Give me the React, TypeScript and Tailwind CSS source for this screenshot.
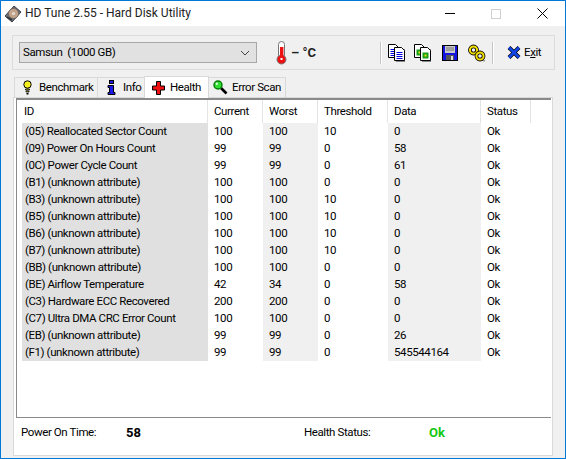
const rows: [string, string, string, string, string][] = [
  ["(05) Reallocated Sector Count", "100", "100", "10", "0"],
  ["(09) Power On Hours Count", "99", "99", "0", "58"],
  ["(0C) Power Cycle Count", "99", "99", "0", "61"],
  ["(B1) (unknown attribute)", "100", "100", "0", "0"],
  ["(B3) (unknown attribute)", "100", "100", "10", "0"],
  ["(B5) (unknown attribute)", "100", "100", "10", "0"],
  ["(B6) (unknown attribute)", "100", "100", "10", "0"],
  ["(B7) (unknown attribute)", "100", "100", "10", "0"],
  ["(BB) (unknown attribute)", "100", "100", "0", "0"],
  ["(BE) Airflow Temperature", "42", "34", "0", "58"],
  ["(C3) Hardware ECC Recovered", "200", "200", "0", "0"],
  ["(C7) Ultra DMA CRC Error Count", "100", "100", "0", "0"],
  ["(EB) (unknown attribute)", "99", "99", "0", "26"],
  ["(F1) (unknown attribute)", "99", "99", "0", "545544164"],
];

function DiskIcon() {
  return (
    <svg width="18" height="18" viewBox="0 0 18 18" className="shrink-0">
      <path d="M10 1 L17 7 L8 17 L1 11 Z" fill="#6a7078" stroke="#3c4048" strokeWidth="1" />
      <circle cx="9.5" cy="8.5" r="5" fill="#c2a48c" stroke="#6a5a50" strokeWidth="0.7" />
      <circle cx="9.5" cy="8.5" r="1.6" fill="#e8dccf" />
      <path d="M3 12 L8 15" stroke="#222" strokeWidth="1.2" />
    </svg>
  );
}

function Thermo() {
  return (
    <svg width="11" height="24" viewBox="0 0 11 24">
      <rect x="2.5" y="0.5" width="6" height="17" rx="3" fill="#fff" stroke="#777" />
      <circle cx="5.5" cy="18.5" r="4.5" fill="#ee1111" stroke="#777" />
      <rect x="4" y="6" width="3.4" height="12" fill="#ee1111" />
      <rect x="4.5" y="17" width="2" height="2" fill="#fff" />
    </svg>
  );
}

function Doc({ x, y, lines }: { x: number; y: number; lines: boolean }) {
  return (
    <g>
      <path d={`M${x} ${y}h7l3 3v10h-10z`} fill="#fff" stroke="#000" />
      {lines ? (
        <path d={`M${x + 2} ${y + 5}h6M${x + 2} ${y + 7}h6M${x + 2} ${y + 9}h6M${x + 2} ${y + 11}h6`} stroke="#0000e0" />
      ) : (
        <g>
          <rect x={x + 2} y={y + 5} width="6" height="6" fill="#18a018" />
          <rect x={x + 4} y={y + 7} width="2" height="2" fill="#f0e010" />
        </g>
      )}
    </g>
  );
}

function Copy({ lines }: { lines: boolean }) {
  return (
    <svg width="17" height="18" viewBox="0 0 17 18">
      <rect x="8" y="5" width="9" height="13" fill="#888" />
      <Doc x={0.5} y={0.5} lines={lines} />
      <Doc x={6.5} y={3.5} lines={lines} />
    </svg>
  );
}

function Floppy() {
  return (
    <svg width="16" height="16" viewBox="0 0 16 16">
      <rect x="0.5" y="0.5" width="15" height="15" fill="#1414e0" stroke="#000" />
      <rect x="3" y="1" width="10" height="7" fill="#c8c8c8" />
      <path d="M4 3h8M4 5h8" stroke="#777" />
      <rect x="4" y="10" width="8" height="5" fill="#555" />
      <rect x="9" y="11" width="2" height="4" fill="#ddd" />
    </svg>
  );
}

function Chain() {
  return (
    <svg width="18" height="18" viewBox="0 0 18 18">
      <path d="M14 16 L17 17" stroke="#999" strokeWidth="1.5" />
      <circle cx="5.5" cy="6" r="3.6" fill="none" stroke="#000" strokeWidth="3.6" />
      <circle cx="5.5" cy="6" r="3.6" fill="none" stroke="#f5e000" strokeWidth="2" />
      <circle cx="12" cy="12" r="3.6" fill="none" stroke="#000" strokeWidth="3.6" />
      <circle cx="12" cy="12" r="3.6" fill="none" stroke="#f5e000" strokeWidth="2" />
    </svg>
  );
}

function XIcon() {
  return (
    <svg width="14" height="13" viewBox="0 0 14 13">
      <path d="M2 1.5 L12 11.5 M12 1.5 L2 11.5" stroke="#000" strokeWidth="4" />
      <path d="M2 1.5 L12 11.5 M12 1.5 L2 11.5" stroke="#1046e8" strokeWidth="2.6" />
    </svg>
  );
}

function Bulb() {
  return (
    <svg width="9" height="15" viewBox="0 0 9 15">
      <circle cx="4.5" cy="4.5" r="3.7" fill="#f7f020" stroke="#000" />
      <path d="M2.5 9h4v1h-4zM3 11h3v1h-3z" fill="#f7f020" stroke="#000" strokeWidth="0.8" />
      <rect x="3.5" y="13" width="2" height="1.5" fill="#000" />
    </svg>
  );
}

function InfoI() {
  return (
    <svg width="9" height="15" viewBox="0 0 9 15">
      <rect x="2.5" y="0.5" width="4" height="3" fill="#1a1ae8" stroke="#000" />
      <path d="M1 5.5h5.5v7h1.5v2h-7v-2h1.5v-5h-1.5z" fill="#1a1ae8" stroke="#000" />
    </svg>
  );
}

function Cross() {
  return (
    <svg width="13" height="14" viewBox="0 0 13 14">
      <path d="M4.5 0.5h4v4.5h4v4h-4v4.5h-4v-4.5h-4v-4h4z" fill="#ee1010" stroke="#000" />
    </svg>
  );
}

function Lens() {
  return (
    <svg width="15" height="15" viewBox="0 0 15 15">
      <path d="M8 8 L13.5 13.5" stroke="#000" strokeWidth="2.6" />
      <circle cx="5" cy="5" r="4" fill="#30e030" stroke="#067a06" strokeWidth="1.4" />
      <circle cx="3.8" cy="3.8" r="1.2" fill="#d8ffd8" />
    </svg>
  );
}

function Tab({ icon, label, active, w, gap }: { icon: React.ReactNode; label: string; active?: boolean; w: string; gap: string }) {
  return (
    <div
      className={
        active
          ? `${w} ${gap} h-[22px] -mb-px z-10 bg-white border border-b-0 border-[#d9d9d9] flex items-center whitespace-nowrap`
          : `${w} ${gap} h-[20px] bg-[#f0f0f0] border border-b-0 border-[#d9d9d9] flex items-center whitespace-nowrap`
      }
    >
      {icon}
      <span>{label}</span>
    </div>
  );
}

const Sep = () => <div className="w-[2px] h-[22px] bg-[#c4c4c4] border-r border-white" />;

const cols = "grid grid-cols-[186px_55px_55px_70px_93px_70px]";

export default function App() {
  return (
    <div
      className="w-[566px] h-[459px] border border-[#0078d7] bg-[#f0f0f0] flex flex-col text-[11.5px] tracking-[-0.4px] leading-[17px] text-black overflow-hidden"
      style={{ fontFamily: 'Roboto, "Liberation Sans", Arial, sans-serif' }}
    >
      <div className="h-[25px] bg-white flex items-center shrink-0">
        <div className="ml-[3px] mr-[3px] flex"><DiskIcon /></div>
        <span className="text-[12px] tracking-normal text-[#222]">HD Tune 2.55 - Hard Disk Utility</span>
        <div className="ml-auto flex items-center">
          <div className="w-[46px] flex justify-center"><div className="w-[10px] h-px bg-black" /></div>
          <div className="w-[46px] flex justify-center"><div className="w-[10px] h-[10px] border border-[#cfcfcf]" /></div>
          <div className="w-[46px] flex justify-center">
            <svg width="11" height="11" viewBox="0 0 11 11"><path d="M0.5 0.5 L10.5 10.5 M10.5 0.5 L0.5 10.5" stroke="#000" fill="none" /></svg>
          </div>
        </div>
      </div>

      <div className="ml-[11px] mr-[10px] mt-[9px] h-[35px] border border-[#dcdcdc] flex items-center shrink-0">
        <div className="ml-[6px] w-[238px] h-[21px] bg-[#e1e1e1] border border-[#a8a8a8] flex items-center pl-[3px] pr-[4px]">
          <span>Samsun&nbsp; (1000 GB)</span>
          <svg className="ml-auto mr-[2px]" width="10" height="6" viewBox="0 0 10 6"><path d="M1 1 L5 5 L9 1" stroke="#444" fill="none" /></svg>
        </div>
        <div className="ml-[19px] flex items-center"><Thermo /></div>
        <span className="ml-[4px] font-bold text-[13px] tracking-normal text-[#222] w-[30px] whitespace-nowrap">– °C</span>
        <div className="ml-[59px]"><Sep /></div>
        <div className="ml-[6px] flex"><Copy lines /></div>
        <div className="ml-[9px] flex"><Copy lines={false} /></div>
        <div className="ml-[11px] flex"><Floppy /></div>
        <div className="ml-[10px] flex"><Chain /></div>
        <div className="ml-[6px]"><Sep /></div>
        <div className="ml-[13px] flex"><XIcon /></div>
        <span className="ml-[3px]">E<span className="underline">x</span>it</span>
      </div>

      <div className="ml-[13px] mt-[6px] flex items-end h-[21px] shrink-0">
        <Tab w="w-[84px]" gap="pl-[8px] gap-[7px]" icon={<Bulb />} label="Benchmark" />
        <Tab w="w-[48px] -ml-px" gap="pl-[9px] gap-[7px]" icon={<InfoI />} label="Info" />
        <Tab w="w-[65px] -ml-px" gap="pl-[7px] gap-[5px]" active icon={<Cross />} label="Health" />
        <Tab w="w-[78px] -ml-px" gap="pl-[4px] gap-[4px]" icon={<Lens />} label="Error Scan" />
      </div>

      <div className="ml-[12px] mr-[12px] mb-[2px] flex-1 bg-white border border-[#d9d9d9] flex flex-col pl-[2px] pr-px">
        <div className="h-[320px] border-t-2 border-l border-b border-[#8a8a8a] flex flex-col shrink-0">
          <div className="flex h-[23px] items-center shrink-0">
            {[
              ["ID", "w-[191px] pl-[7px]"],
              ["Current", "w-[55px] pl-[6px]"],
              ["Worst", "w-[55px] pl-[6px]"],
              ["Threshold", "w-[70px] pl-[6px]"],
              ["Data", "w-[93px] pl-[6px]"],
              ["Status", "w-[50px] pl-[6px]"],
            ].map(([t, w]) => (
              <div key={t} className={`${w} h-full flex items-center border-r border-[#e4e4e4]`}>{t}</div>
            ))}
          </div>
          <div className="pl-[5px] flex flex-col">
            {rows.map((r) => (
              <div key={r[0]} className={`${cols} h-[17px]`}>
                <div className="bg-[#e0e0e0] pl-[3px] whitespace-nowrap">{r[0]}</div>
                <div className="pl-[6px]">{r[1]}</div>
                <div className="bg-[#f0f0f0] pl-[6px]">{r[2]}</div>
                <div className="pl-[6px]">{r[3]}</div>
                <div className="bg-[#f0f0f0] pl-[6px]">{r[4]}</div>
                <div className="pl-[6px]">Ok</div>
              </div>
            ))}
          </div>
        </div>
        <div className="flex items-center flex-1 pb-[8px] pl-[5px]">
          <span className="w-[105px]">Power On Time:</span>
          <span className="font-bold text-[13px] tracking-normal w-[178px]">58</span>
          <span className="w-[125px]">Health Status:</span>
          <span className="font-bold text-[13px] tracking-normal text-[#14c814]">Ok</span>
        </div>
      </div>
    </div>
  );
}
